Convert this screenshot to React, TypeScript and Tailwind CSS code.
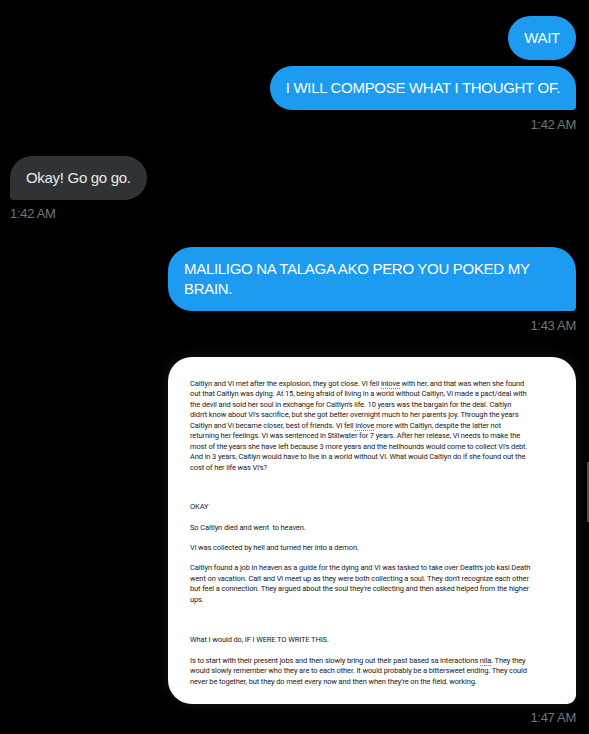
import React from 'react';

const chatFont = { fontFamily: '"Liberation Sans", Arial, sans-serif' };

const Squiggle: React.FC<{ children: React.ReactNode }> = ({ children }) => (
  <span className="border-b border-dotted border-[#e35d57]">{children}</span>
);

const Stamp: React.FC<{ right?: boolean; mt: string; children: React.ReactNode }> = ({ right, mt, children }) => (
  <div className={`${mt} text-[13px] leading-4 tracking-[-0.3px] text-[#71767b] ${right ? 'text-right' : 'text-left'}`}>
    {children}
  </div>
);

const Lines: React.FC<{ className?: string; lines: React.ReactNode[] }> = ({ className = '', lines }) => (
  <div className={className}>
    {lines.map((l, i) => (
      <div key={i} className="whitespace-pre">{l}</div>
    ))}
  </div>
);

const DocShot: React.FC = () => (
  <div
    className="w-[408px] h-[347px] bg-white rounded-3xl rounded-br-[9px] shadow-[0_0_12px_2px_rgba(255,255,255,0.07)] pl-[22px] pt-[22px] text-[7.5px] leading-[10.45px] tracking-[-0.12px] text-[#1a1a1a]"
    style={{ fontFamily: 'Roboto, "Liberation Sans", sans-serif' }}
  >
    <Lines
      lines={[
        <>Caitlyn and Vi met after the explosion, they got close. Vi fell <Squiggle>inlove</Squiggle> with her, and that was when she found</>,
        'out that Caitlyn was dying. At 15, being afraid of living in a world without Caitlyn, Vi made a pact/deal with',
        "the devil and sold her soul in exchange for Caitlyn's life. 10 years was the bargain for the deal. Caitlyn",
        "didn't know about Vi's sacrifice, but she got better overnight much to her parents joy. Through the years",
        <>Caitlyn and Vi became closer, best of friends. Vi fell <Squiggle>inlove</Squiggle> more with Caitlyn, despite the latter not</>,
        'returning her feelings. Vi was sentenced in Stillwater for 7 years. After her release, Vi needs to make the',
        "most of the years she have left because 3 more years and the hellhounds would come to collect Vi's debt.",
        'And in 3 years, Caitlyn would have to live in a world without Vi. What would Caitlyn do if she found out the',
        "cost of her life was Vi's?",
      ]}
    />
    <Lines className="mt-[29px]" lines={['OKAY']} />
    <Lines className="mt-[10px]" lines={['So Caitlyn died and went  to heaven.']} />
    <Lines className="mt-[10px]" lines={['Vi was collected by hell and turned her into a demon.']} />
    <Lines
      className="mt-[10px]"
      lines={[
        "Caitlyn found a job in heaven as a guide for the dying and Vi was tasked to take over Death's job kasi Death",
        "went on vacation. Cait and Vi meet up as they were both collecting a soul. They don't recognize each other",
        "but feel a connection. They argued about the soul they're collecting and then asked helped from the higher",
        'ups.',
      ]}
    />
    <Lines className="mt-[30px]" lines={['What I would do, IF I WERE TO WRITE THIS.']} />
    <Lines
      className="mt-[10px]"
      lines={[
        <>Is to start with their present jobs and then slowly bring out their past based sa interactions <Squiggle>nila</Squiggle>. They they</>,
        'would slowly remember who they are to each other. It would probably be a bittersweet ending. They could',
        "never be together, but they do meet every now and then when they're on the field, working.",
      ]}
    />
  </div>
);

const App: React.FC = () => {
  const bubble = 'text-[15px] leading-5 tracking-[-0.3px] px-4 py-3 rounded-3xl';
  const mine = `${bubble} bg-[#1d9bf0] text-white`;

  return (
    <div className="relative w-full h-[734px] bg-black overflow-hidden" style={chatFont}>
      <div className="flex flex-col pl-[10px] pr-[13px] pt-4">
        <div className="flex flex-col items-end gap-[6px]">
          <div className={mine}>WAIT</div>
          <div className={`${mine} rounded-br-[4px]`}>I WILL COMPOSE WHAT I THOUGHT OF.</div>
        </div>
        <Stamp right mt="mt-[7px]">1:42 AM</Stamp>

        <div className="mt-[23px] flex">
          <div className={`${bubble} bg-[#2f3336] text-[#e7e9ea] rounded-bl-[4px]`}>Okay! Go go go.</div>
        </div>
        <Stamp mt="mt-[6px]">1:42 AM</Stamp>

        <div className="mt-[25px] flex justify-end">
          <div className={`${mine} rounded-br-[4px] max-w-[408px]`}>
            MALILIGO NA TALAGA AKO PERO YOU POKED MY BRAIN.
          </div>
        </div>
        <Stamp right mt="mt-[7px]">1:43 AM</Stamp>

        <div className="mt-[23px] flex justify-end">
          <DocShot />
        </div>
        <Stamp right mt="mt-[6px]">1:47 AM</Stamp>
      </div>

      {/* scrollbar thumb */}
      <div className="absolute right-0 top-[462px] w-[2px] h-[60px] bg-[#4d4d4d]" />
    </div>
  );
};

export default App;
